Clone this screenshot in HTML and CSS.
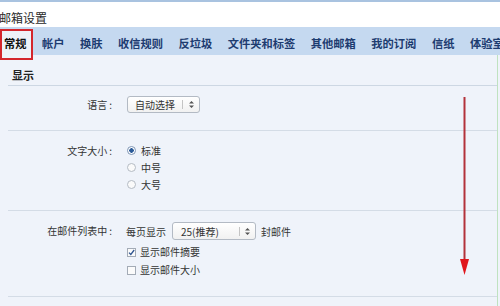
FILE: index.html
```html
<!DOCTYPE html>
<html lang="zh-CN">
<head>
<meta charset="utf-8">
<title>邮箱设置</title>
<link rel="stylesheet" href="styles.css">
</head>
<body>
<div class="page">
  <div class="topline"></div>
  <div class="title">邮箱设置</div>
  <nav class="tabs">
    <span class="tab active">常规</span>
    <span class="tab">帐户</span>
    <span class="tab">换肤</span>
    <span class="tab">收信规则</span>
    <span class="tab">反垃圾</span>
    <span class="tab">文件夹和标签</span>
    <span class="tab">其他邮箱</span>
    <span class="tab">我的订阅</span>
    <span class="tab">信纸</span>
    <span class="tab">体验室</span>
  </nav>
  <div class="panel">
    <div class="panel-head">显示</div>

    <div class="section s1">
      <div class="label">语言<span class="colon">:</span></div>
      <div class="ctrl">
        <div class="select sel-lang">
          <span class="sel-text">自动选择</span>
          <span class="sel-sep"></span>
          <span class="sel-arrows"><svg width="5" height="7" viewBox="0 0 5 7"><path d="M2.5 0 L5 2.5 L0 2.5 Z M0 4.5 L5 4.5 L2.5 7 Z" fill="#555"/></svg></span>
        </div>
      </div>
    </div>

    <div class="section s2">
      <div class="label">文字大小<span class="colon">:</span></div>
      <div class="ctrl">
        <div class="opt"><span class="radio on"></span>标准</div>
        <div class="opt"><span class="radio"></span>中号</div>
        <div class="opt"><span class="radio"></span>大号</div>
      </div>
    </div>

    <div class="section s3">
      <div class="label">在邮件列表中<span class="colon">:</span></div>
      <div class="ctrl">
        <div class="line-sel">
          <span>每页显示</span>
          <div class="select sel-count">
            <span class="sel-text">25(推荐)</span>
            <span class="sel-sep"></span>
            <span class="sel-arrows"><svg width="5" height="7" viewBox="0 0 5 7"><path d="M2.5 0 L5 2.5 L0 2.5 Z M0 4.5 L5 4.5 L2.5 7 Z" fill="#555"/></svg></span>
          </div>
          <span>封邮件</span>
        </div>
        <div class="chk-row first"><span class="check on"><svg width="7" height="7" viewBox="0 0 7 7"><path d="M1 3.6 L2.8 5.5 L6.2 1" fill="none" stroke="#2f5590" stroke-width="1.3"/></svg></span>显示邮件摘要</div>
        <div class="chk-row"><span class="check"></span>显示邮件大小</div>
      </div>
    </div>
  </div>

  <div class="mark-box"></div>
  <svg class="mark-arrow" width="20" height="185" viewBox="0 0 20 185">
    <line x1="9.5" y1="2" x2="9.5" y2="168" stroke="#b3323b" stroke-width="2"/>
    <polygon points="5,164 14,164 9.5,180" fill="#e0161c"/>
  </svg>
</div>
</body>
</html>
```

FILE: styles.css
```css
html, body {
  margin: 0;
  padding: 0;
}
body {
  width: 500px;
  height: 306px;
  overflow: hidden;
  background: #eff3fa;
  font-family: "Noto Sans CJK SC", "Noto Sans", sans-serif;
  color: #333;
}
.page {
  position: relative;
  width: 500px;
  height: 306px;
  overflow: hidden;
}
.topline {
  height: 2px;
  background: #a9c3e0;
}
.title {
  height: 25px;
  box-sizing: border-box;
  padding-top: 7px;
  line-height: 18px;
  font-size: 12px;
  margin-left: -1px;
  background: #fff;
  color: #2a2a2a;
}
.tabs {
  display: flex;
  height: 28px;
  padding-left: 4px;
  gap: 15.5px;
  background: #c5d9f0;
  font-size: 11.25px;
  font-weight: bold;
  color: #1d3c70;
  white-space: nowrap;
}
.tab {
  display: flex;
  align-items: center;
  padding-top: 3px;
  line-height: 14px;
}
.tab.active {
  color: #111;
  background: #eef2f8;
  margin-top: 2px;
  padding-top: 1px;
  margin-left: -4px;
  padding-left: 4px;
  padding-right: 6px;
  margin-right: -6px;
}
.panel {
  width: 498px;
  height: 251px;
  box-sizing: border-box;
  border-right: 1px solid #bfe2c0;
  background: #eff3fa;
}
.panel-head {
  margin-left: 8px;
  height: 31px;
  box-sizing: border-box;
  padding-top: 13px;
  padding-left: 4px;
  line-height: 14px;
  font-size: 11px;
  font-weight: bold;
  color: #222;
  border-bottom: 1px solid #cdd7e3;
}
.section {
  margin-left: 8px;
  display: grid;
  grid-template-columns: 104px 1fr;
  column-gap: 15px;
  align-items: start;
  box-sizing: border-box;
  border-bottom: 1px solid #d4dce6;
  font-size: 10px;
  color: #333;
}
.label {
  text-align: right;
  white-space: nowrap;
}
.colon {
  margin-left: 2px;
}
.s1 {
  height: 45px;
  padding-top: 10px;
}
.s1 .label {
  line-height: 17px;
}
.s2 {
  height: 80px;
  padding-top: 11px;
}
.s2 .label {
  line-height: 17px;
}
.s3 {
  height: 86px;
  padding-top: 11px;
}
.s3 .label {
  line-height: 18px;
}
.select {
  display: flex;
  align-items: center;
  box-sizing: border-box;
  border: 1px solid #b3bac4;
  border-radius: 3px;
  background: linear-gradient(#ffffff, #f1f1f1);
  color: #333;
  font-size: 10px;
}
.sel-text {
  flex: 1;
  white-space: nowrap;
}
.sel-sep {
  width: 1px;
  height: 9px;
  background: #c4c4c4;
}
.sel-arrows {
  display: flex;
  justify-content: center;
  align-items: center;
}
.sel-lang {
  width: 73px;
  height: 17px;
  padding-left: 7px;
}
.sel-lang .sel-arrows {
  width: 16px;
}
.sel-count {
  width: 84px;
  height: 18px;
  padding-left: 8px;
}
.sel-count .sel-arrows {
  width: 15px;
}
.opt {
  display: flex;
  align-items: center;
  line-height: 17px;
  height: 17px;
}
.radio {
  width: 9px;
  height: 9px;
  box-sizing: border-box;
  border: 1px solid #b4bbc4;
  border-radius: 50%;
  background: #fafafa;
  margin-right: 5px;
}
.radio.on {
  border-color: #7f96b5;
  background: radial-gradient(circle, #2b5a98 0 2px, #fff 2.5px);
}
.line-sel {
  display: flex;
  align-items: center;
  height: 18px;
  gap: 6px;
  margin-left: -1px;
}
.line-sel .select {
  margin-right: -1px;
}
.chk-row {
  display: flex;
  align-items: center;
  height: 18px;
  line-height: 18px;
}
.chk-row.first {
  margin-top: 3px;
}
.check {
  display: flex;
  align-items: center;
  justify-content: center;
  width: 9px;
  height: 9px;
  box-sizing: border-box;
  border: 1px solid #a3abb6;
  background: #fbfbfb;
  margin-right: 4px;
}
.mark-box {
  position: absolute;
  left: 0;
  top: 29px;
  width: 33px;
  height: 31px;
  box-sizing: border-box;
  border: 2px solid #d4262c;
}
.mark-arrow {
  position: absolute;
  left: 455px;
  top: 95px;
}
```
